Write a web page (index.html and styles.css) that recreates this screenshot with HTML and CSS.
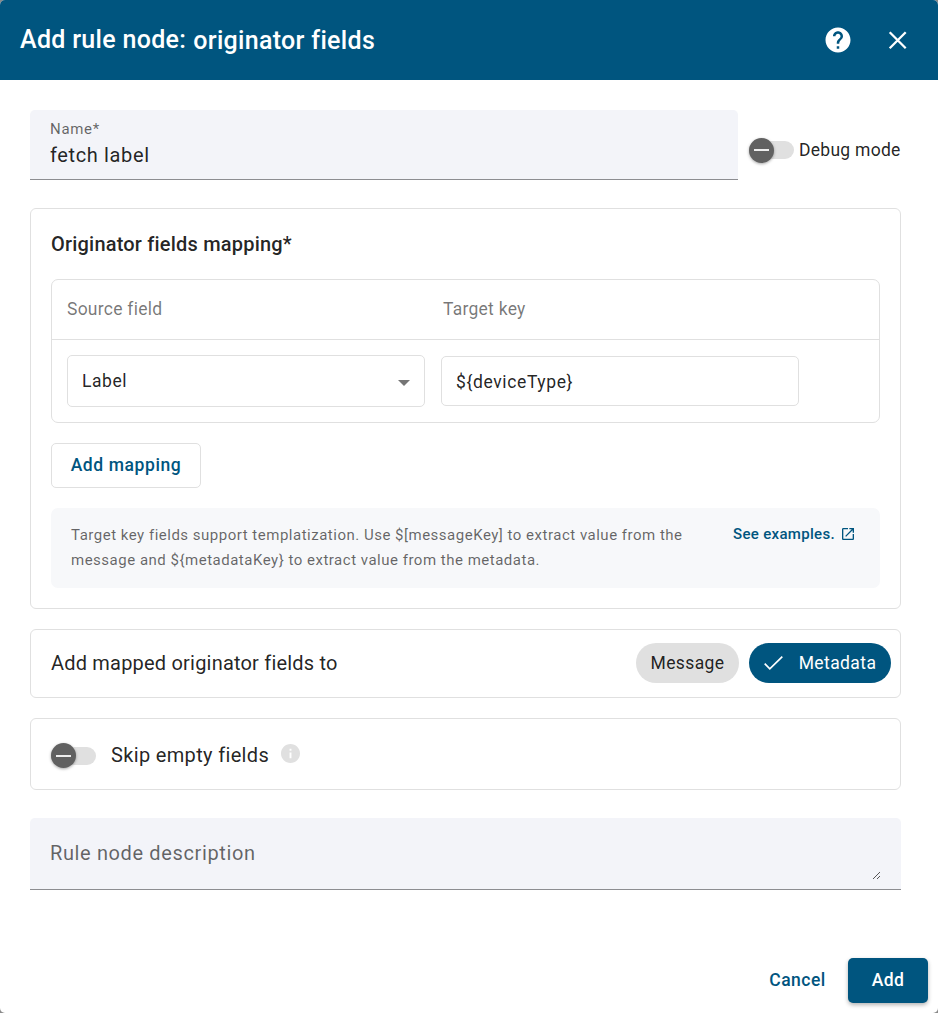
FILE: index.html
```html
<!DOCTYPE html>
<html lang="en">
<head>
<meta charset="utf-8">
<title>Add rule node</title>
<link rel="stylesheet" href="styles.css">
</head>
<body>
<div class="dialog">
  <header class="toolbar">
    <h1 class="title"><span class="title-main">Add rule node:</span><span class="title-type">originator fields</span></h1>
    <svg class="icon-help" viewBox="0 0 24 24" width="30" height="30"><path fill="#fff" d="M12 2C6.48 2 2 6.48 2 12s4.48 10 10 10 10-4.480 10-10S17.520 2 12 2zm1 17h-2v-2h2v2zm2.070-7.750l-.9.920C13.450 12.900 13 13.500 13 15h-2v-.5c0-1.100.45-2.100 1.170-2.830l1.240-1.260c.37-.36.59-.86.59-1.410 0-1.100-.9-2-2-2s-2 .9-2 2H8c0-2.210 1.790-4 4-4s4 1.790 4 4c0 .88-.36 1.680-.93 2.250z"/></svg>
    <svg class="icon-close" viewBox="0 0 30 30" width="30" height="30"><path fill="none" stroke="#fff" stroke-width="2.300" d="M6.700 7.200L22.700 23.200M22.700 7.200L6.700 23.200"/></svg>
  </header>
  <main class="content">
    <div class="name-row">
      <div class="name-field">
        <label class="name-label">Name*</label>
        <span class="name-value">fetch label</span>
      </div>
      <div class="debug">
        <span class="toggle"><span class="thumb"></span></span>
        <span class="debug-label">Debug mode</span>
      </div>
    </div>
    <section class="card mapping">
      <h2 class="mapping-title">Originator fields mapping*</h2>
      <div class="table">
        <div class="table-head"><span>Source field</span><span>Target key</span></div>
        <div class="table-row">
          <div class="select"><span>Label</span><i class="arrow"></i></div>
          <div class="input">${deviceType}</div>
        </div>
      </div>
      <button class="add-mapping">Add mapping</button>
      <div class="hint">
        <p class="hint-text">Target key fields support templatization. Use $[messageKey] to extract value from the<br>message and ${metadataKey} to extract value from the metadata.</p>
        <a class="hint-link"><span>See examples.</span><svg viewBox="0 0 24 24" width="16" height="16"><path fill="#00557f" d="M19 19H5V5h7V3H5c-1.110 0-2 .9-2 2v14c0 1.100.89 2 2 2h14c1.100 0 2-.9 2-2v-7h-2v7zM14 3v2h3.590l-9.830 9.830 1.410 1.410L19 6.410V10h2V3h-7z"/></svg></a>
      </div>
    </section>
    <section class="card target">
      <span class="target-label">Add mapped originator fields to</span>
      <span class="chip">Message</span>
      <span class="chip chip-on"><svg viewBox="0 0 20 16" width="20" height="16"><path fill="none" stroke="#fff" stroke-width="1.700" d="M.7 8.700l5.100 5.100L18.300 1.700"/></svg><span>Metadata</span></span>
    </section>
    <section class="card skip">
      <span class="toggle"><span class="thumb"></span></span>
      <span class="skip-label">Skip empty fields</span>
      <svg class="icon-info" viewBox="2 2 20 20" width="19" height="19"><path fill="#e0e0e0" d="M12 2C6.480 2 2 6.480 2 12s4.480 10 10 10 10-4.480 10-10S17.520 2 12 2zm1 15h-2v-6h2v6zm0-8h-2V7h2v2z"/></svg>
    </section>
    <div class="description">
      <span class="description-label">Rule node description</span>
      <svg class="grip" viewBox="0 0 9 9" width="9" height="9"><path fill="none" stroke="#444" stroke-width=".9" d="M1 8L8 1M5 8l3-3"/></svg>
    </div>
  </main>
  <footer class="actions">
    <button class="cancel">Cancel</button>
    <button class="add">Add</button>
  </footer>
</div>
</body>
</html>
```
FILE: styles.css
```css
* { box-sizing: border-box; }
body { margin: 0; background: #8a8a8a; font-family: Roboto, "Liberation Sans", sans-serif; color: rgba(0,0,0,.87); }
h1, h2, p { margin: 0; }
button { font-family: inherit; margin: 0; padding: 0; border: 0; background: none; }
svg { display: block; flex: none; }
.dialog { width: 938px; height: 1013px; display: flex; flex-direction: column; background: #fff; border-radius: 5px; overflow: hidden; }
.toolbar { height: 80px; flex: none; display: flex; align-items: center; padding: 0 25px 0 20px; background: #00557f; color: #fff; }
.title { flex: 1; display: flex; align-items: flex-start; font-size: 25px; line-height: 32px; font-weight: 500; letter-spacing: .3125px; white-space: nowrap; }
.title-main { margin-right: 7px; }
.title-type { padding-top: 1px; }
.icon-close { margin-left: 30px; }
.content { flex: 1; padding: 30px 37px 0 30px; }
.name-row { display: flex; height: 70px; }
.name-field { width: 708px; background: #f3f4f9; border-bottom: 1px solid #8c8d91; border-radius: 5px 5px 0 0; padding: 9px 20px 0; display: flex; flex-direction: column; }
.name-label { font-size: 15px; line-height: 20px; letter-spacing: .7px; color: rgba(0,0,0,.6); }
.name-value { font-size: 20px; line-height: 32px; letter-spacing: .625px; }
.debug { display: flex; align-items: center; margin-left: 11px; padding-top: 10px; height: 70px; }
.toggle { width: 45px; height: 18px; border-radius: 9px; background: #e0e0e0; display: flex; align-items: center; flex: none; }
.thumb { width: 25px; height: 25px; flex: none; border-radius: 50%; background: #616161; display: flex; align-items: center; justify-content: center; box-shadow: 0 1px 3px rgba(0,0,0,.35); }
.thumb::after { content: ""; width: 15px; height: 2px; background: #eee; }
.debug-label { margin-left: 5px; font-size: 17.5px; line-height: 25px; letter-spacing: .28px; white-space: nowrap; }
.card { border: 1px solid #e0e0e0; border-radius: 6px; }
.mapping { height: 401px; margin-top: 28px; padding: 20px; }
.mapping-title { font-size: 20px; line-height: 30px; font-weight: 500; letter-spacing: .2px; }
.table { height: 144px; margin-top: 20px; border: 1px solid #e0e0e0; border-radius: 7px; }
.table-head { height: 60px; border-bottom: 1px solid #e0e0e0; display: grid; grid-template-columns: 376px 1fr; align-items: center; padding: 0 0 2px 15px; font-size: 17.5px; letter-spacing: .25px; color: rgba(0,0,0,.54); }
.table-row { height: 82px; display: flex; align-items: center; gap: 16px; padding: 0 15px; }
.select, .input { width: 358px; border: 1px solid #e0e0e0; border-radius: 5px; display: flex; align-items: center; padding: 0 14px; font-size: 17.5px; letter-spacing: .55px; }
.select { height: 52px; justify-content: space-between; }
.input { height: 50px; padding-top: 2px; letter-spacing: .62px; }
.arrow { width: 0; height: 0; border: 6.5px solid transparent; border-top-color: #757575; border-bottom: 0; margin-top: 3px; }
.add-mapping { display: block; width: 150px; height: 45px; margin-top: 20px; padding-bottom: 2px; border: 1px solid #e0e0e0; border-radius: 5px; font-size: 17.5px; font-weight: 500; letter-spacing: .6px; color: #00557f; }
.hint { height: 80px; margin-top: 20px; padding: 14px 24px 0 20px; border-radius: 7px; background: #f7f8fa; display: flex; justify-content: space-between; }
.hint-text { padding-top: 1px; font-size: 15px; line-height: 25px; letter-spacing: .505px; color: rgba(0,0,0,.6); white-space: nowrap; }
.hint-link { height: 24px; display: flex; align-items: center; font-size: 15px; font-weight: 500; letter-spacing: .32px; color: #00557f; gap: 5px; white-space: nowrap; }
.target { height: 69px; margin-top: 20px; display: flex; align-items: center; padding: 0 9px 2px 20px; }
.target-label { flex: 1; font-size: 20px; letter-spacing: .2px; }
.chip { height: 40px; width: 103px; border-radius: 20px; background: #e0e0e0; display: flex; align-items: center; justify-content: center; font-size: 17.5px; letter-spacing: .4px; }
.chip-on { width: 142px; margin-left: 10px; background: #00557f; color: #fff; gap: 15px; }
.skip { height: 72px; margin-top: 20px; padding: 2px 20px 0; display: flex; align-items: center; }
.skip .toggle { margin-top: 1px; }
.skip-label { margin: 0 12px 0 15px; font-size: 20px; letter-spacing: .34px; }
.icon-info { margin-bottom: 4px; }
.description { height: 72px; margin-top: 28px; padding: 0 20px; background: #f3f4f9; border-bottom: 1px solid #8c8d91; border-radius: 5px 5px 0 0; display: flex; justify-content: space-between; align-items: center; }
.description-label { padding-bottom: 2px; font-size: 20px; letter-spacing: .625px; color: rgba(0,0,0,.6); }
.grip { align-self: flex-end; margin-bottom: 9px; }
.actions { height: 65px; flex: none; display: flex; justify-content: flex-end; padding: 10px 10px 0 0; font-size: 17.5px; }
.cancel, .add { height: 45px; padding-bottom: 2px; font-size: 17.5px; font-weight: 500; letter-spacing: .45px; }
.cancel { width: 101px; color: #00557f; }
.add { width: 80px; border-radius: 5px; background: #00557f; color: #fff; box-shadow: 0 2px 4px rgba(0,0,0,.3); }
```
